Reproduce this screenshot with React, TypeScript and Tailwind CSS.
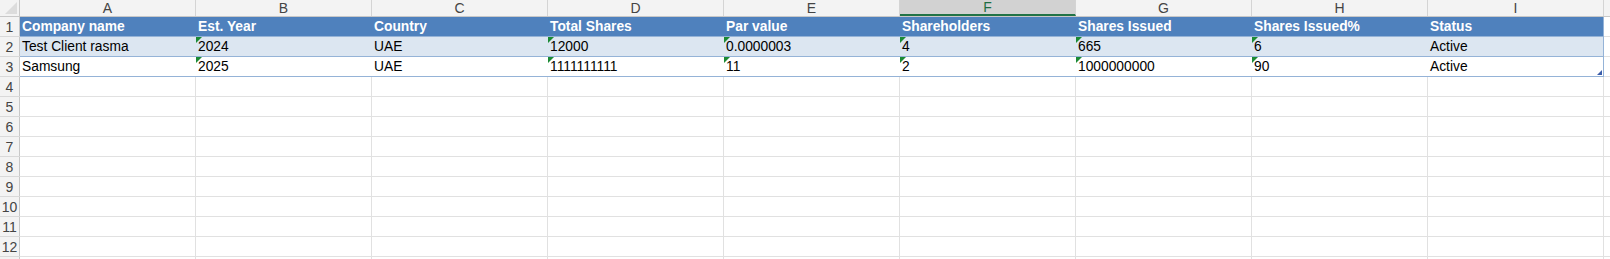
import React from 'react';

const COLS = ['A', 'B', 'C', 'D', 'E', 'F', 'G', 'H', 'I'];

const HEADERS = [
  'Company name',
  'Est. Year',
  'Country',
  'Total Shares',
  'Par value',
  'Shareholders',
  'Shares Issued',
  'Shares Issued%',
  'Status',
];

const DATA = [
  ['Test Client rasma', '2024', 'UAE', '12000', '0.0000003', '4', '665', '6', 'Active'],
  ['Samsung', '2025', 'UAE', '1111111111', '11', '2', '1000000000', '90', 'Active'],
];

// columns holding numbers stored as text get the green corner mark
const FLAGGED = [1, 3, 4, 5, 6, 7];

const ROW_COUNT = 13;

function RowHeader({ n }: { n?: number }) {
  return (
    <div className="w-[20px] shrink-0 h-full flex items-center justify-center bg-[#f3f3f3] border-r border-[#c8c8c8] text-[14px] text-[#444444] leading-none">
      {n}
    </div>
  );
}

function TableRow({ index }: { index: number }) {
  const isHeader = index === 0;
  const cells = isHeader ? HEADERS : DATA[index - 1];
  const banded = index === 1;

  return (
    <div className="flex h-[20px] shrink-0">
      <div className="h-full border-b border-[#d9d9d9]">
        <RowHeader n={index + 1} />
      </div>
      {cells.map((text, c) => (
        <div
          key={c}
          className={
            'relative w-[176px] shrink-0 h-full flex items-end pb-[1px] pl-[2px] ' +
            (isHeader
              ? 'bg-[#4f81bd] text-white font-bold border-b border-[#95b3d7] '
              : banded
                ? 'bg-[#dce6f1] text-black border-b border-[#95b3d7] '
                : 'bg-white text-black border-b border-[#95b3d7] ') +
            (c === cells.length - 1 ? 'border-r border-r-[#95b3d7]' : '')
          }
        >
          <span className="leading-[17px] whitespace-nowrap">{text}</span>
          {!isHeader && FLAGGED.includes(c) && (
            <span className="absolute left-0 top-0 w-[6px] h-[6px] bg-[#1b8a35] [clip-path:polygon(0_0,100%_0,0_100%)]" />
          )}
          {index === 2 && c === cells.length - 1 && (
            <span className="absolute right-[1px] bottom-[1px] w-[5px] h-[5px] bg-[#3b5daa] [clip-path:polygon(100%_0,100%_100%,0_100%)]" />
          )}
        </div>
      ))}
      <div className="flex-1 h-full border-b border-[#e1e1e1]" />
    </div>
  );
}

function EmptyRow({ n }: { n?: number }) {
  return (
    <div className="flex h-[20px] shrink-0">
      <div className="h-full border-b border-[#d9d9d9]">
        <RowHeader n={n} />
      </div>
      {COLS.map((c) => (
        <div key={c} className="w-[176px] shrink-0 h-full border-r border-b border-[#e1e1e1]" />
      ))}
      <div className="flex-1 h-full border-b border-[#e1e1e1]" />
    </div>
  );
}

export default function App() {
  return (
    <div className="w-[1610px] h-[259px] overflow-hidden bg-white font-['Liberation_Sans',Arial,sans-serif] text-[13.8px] flex flex-col">
      <div className="flex h-[17px] shrink-0 bg-[#f3f3f3] border-b border-[#c8c8c8]">
        <div className="relative w-[20px] shrink-0 h-full border-r border-[#c8c8c8]">
          <span className="absolute right-[2px] bottom-[2px] w-[12px] h-[12px] bg-[#dcdcdc] [clip-path:polygon(100%_0,100%_100%,0_100%)]" />
        </div>
        {COLS.map((c) => (
          <div
            key={c}
            className={
              'w-[176px] shrink-0 h-full flex items-center justify-center text-[14px] leading-none border-r border-[#d4d4d4] ' +
              (c === 'F'
                ? 'bg-[#d2d2d2] text-[#1e6e42] border-b-2 border-b-[#217346]'
                : 'text-[#444444]')
            }
          >
            {c}
          </div>
        ))}
        <div className="flex-1 h-full" />
      </div>
      {[0, 1, 2].map((i) => (
        <TableRow key={i} index={i} />
      ))}
      {Array.from({ length: ROW_COUNT - 3 }, (_, i) => (
        <EmptyRow key={i} n={i + 4 < ROW_COUNT ? i + 4 : undefined} />
      ))}
    </div>
  );
}
